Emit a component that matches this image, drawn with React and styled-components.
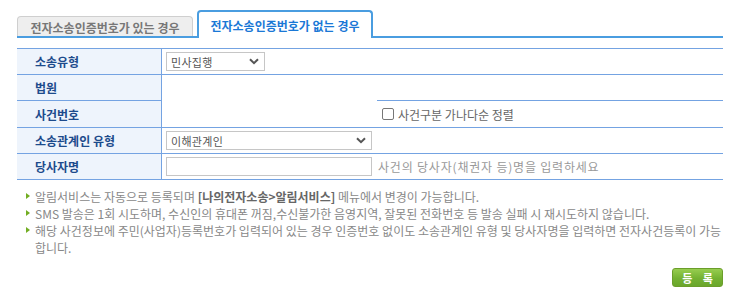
import React from "react";
import styled, { createGlobalStyle } from "styled-components";

const Global = createGlobalStyle`
  html, body { margin: 0; padding: 0; background: #fff; }
  body { font-family: "Noto Sans CJK KR", "Noto Sans", sans-serif; font-size: 12px; color: #666; }
`;

const Page = styled.div`
  padding: 10px 12px 0 17px;
`;

const TabBar = styled.div`
  display: flex;
  align-items: flex-end;
  gap: 4px;
  height: 26px;
  border-bottom: 2px solid #4a9de0;
`;

const Tab = styled.div`
  box-sizing: border-box;
  display: flex;
  align-items: center;
  justify-content: center;
  font-weight: bold;
  font-size: 12px;
  border-radius: 4px 4px 0 0;
  width: 176px;
  ${(p) =>
    p.$active
      ? `
    height: 28px;
    margin-bottom: -2px;
    background: #fff;
    color: #1a78d6;
    border: 2px solid #4a9de0;
    border-bottom: none;
    padding-top: 1px;
  `
      : `
    height: 20px;
    background: #eeeeee;
    color: #777;
    border: 1px solid #cfcfcf;
    border-bottom: none;
    padding-top: 1px;
  `}
`;

const Table = styled.div`
  margin-top: 10px;
  display: grid;
  grid-template-columns: 145px 1fr;
  border-top: 1px solid #74a3e2;
`;

const Label = styled.div`
  box-sizing: border-box;
  height: ${(p) => p.$h || 26}px;
  display: flex;
  align-items: center;
  padding-left: 18px;
  background: #eef4fc;
  border-right: 1px solid #74a3e2;
  border-bottom: 1px solid #74a3e2;
  color: #1d4b8c;
  font-weight: bold;
  font-size: 12px;
`;

const Value = styled.div`
  box-sizing: border-box;
  height: ${(p) => p.$h || 26}px;
  display: flex;
  align-items: center;
  gap: 6px;
  padding-left: 4px;
  border-bottom: 1px solid #74a3e2;
`;

const SplitValue = styled.div`
  grid-row: span 2;
  display: flex;
  border-bottom: 1px solid #74a3e2;
`;

const SplitLeft = styled.div`
  width: 215px;
`;

const SplitRight = styled.div`
  flex: 1;
  display: flex;
  flex-direction: column;
`;

const SplitTop = styled.div`
  height: 25px;
  border-bottom: 1px solid #74a3e2;
`;

const SplitBottom = styled.div`
  flex: 1;
  display: flex;
  align-items: center;
  gap: 4px;
  padding-left: 5px;
  color: #666;
  font-size: 12px;
`;

const Check = styled.span`
  box-sizing: border-box;
  width: 12px;
  height: 12px;
  border: 1px solid #777;
  border-radius: 2px;
  background: #fff;
`;

const SelectWrap = styled.div`
  position: relative;
  box-sizing: border-box;
  width: ${(p) => p.$w}px;
  height: 19px;
  border: 1px solid #c6c6c6;
  background: #fff;
  display: flex;
  align-items: center;
  padding-left: 4px;
  color: #555;
  font-size: 11px;
  letter-spacing: 0.3px;
`;

const Chevron = styled.svg`
  position: absolute;
  right: 5px;
  top: 5px;
`;

const TextInput = styled.div`
  box-sizing: border-box;
  width: 206px;
  height: 19px;
  border: 1px solid #c6c6c6;
  background: #fff;
`;

const Hint = styled.span`
  color: #999;
  font-size: 12px;
  letter-spacing: 0.8px;
`;

const Notes = styled.ul`
  list-style: none;
  margin: 8px 0 0;
  padding: 0 0 0 9px;
`;

const Note = styled.li`
  position: relative;
  padding-left: 9px;
  line-height: 17px;
  color: #888;
  font-size: 12px;
  &::before {
    content: "";
    position: absolute;
    left: 0;
    top: 5px;
    width: 0;
    height: 0;
    border-top: 3px solid transparent;
    border-bottom: 3px solid transparent;
    border-left: 4px solid #72ad22;
  }
`;

const Strong = styled.b`
  color: #666;
`;

const Actions = styled.div`
  display: flex;
  justify-content: flex-end;
  margin-top: 12px;
`;

const Button = styled.button`
  box-sizing: border-box;
  width: 51px;
  height: 19px;
  border: 1px solid #6b9e2a;
  border-radius: 3px;
  background: linear-gradient(#97cd4f, #74b232 55%, #6aa62b);
  color: #fff;
  font-family: inherit;
  font-weight: bold;
  font-size: 11px;
  word-spacing: 8px;
  padding: 0;
`;

const ChevronIcon = () => (
  <Chevron width="10" height="7" viewBox="0 0 10 7">
    <path d="M1 1.2 L5 5.2 L9 1.2" fill="none" stroke="#555" strokeWidth="2" />
  </Chevron>
);

export default function App() {
  return (
    <>
      <Global />
      <Page>
        <TabBar>
          <Tab>전자소송인증번호가 있는 경우</Tab>
          <Tab $active>전자소송인증번호가 없는 경우</Tab>
        </TabBar>
        <Table>
          <Label>소송유형</Label>
          <Value>
            <SelectWrap $w={99}>
              민사집행
              <ChevronIcon />
            </SelectWrap>
          </Value>
          <Label>법원</Label>
          <SplitValue>
            <SplitLeft />
            <SplitRight>
              <SplitTop />
              <SplitBottom>
                <Check />
                사건구분 가나다순 정렬
              </SplitBottom>
            </SplitRight>
          </SplitValue>
          <Label $h={27}>사건번호</Label>
          <Label>소송관계인 유형</Label>
          <Value>
            <SelectWrap $w={206}>
              이해관계인
              <ChevronIcon />
            </SelectWrap>
          </Value>
          <Label>당사자명</Label>
          <Value>
            <TextInput />
            <Hint>사건의 당사자(채권자 등)명을 입력하세요</Hint>
          </Value>
        </Table>
        <Notes>
          <Note>
            알림서비스는 자동으로 등록되며 <Strong>[나의전자소송&gt;알림서비스]</Strong> 메뉴에서 변경이 가능합니다.
          </Note>
          <Note>
            SMS 발송은 1회 시도하며, 수신인의 휴대폰 꺼짐,수신불가한 음영지역, 잘못된 전화번호 등 발송 실패 시 재시도하지 않습니다.
          </Note>
          <Note>
            해당 사건정보에 주민(사업자)등록번호가 입력되어 있는 경우 인증번호 없이도 소송관계인 유형 및 당사자명을 입력하면 전자사건등록이 가능합니다.
          </Note>
        </Notes>
        <Actions>
          <Button>등 록</Button>
        </Actions>
      </Page>
    </>
  );
}
